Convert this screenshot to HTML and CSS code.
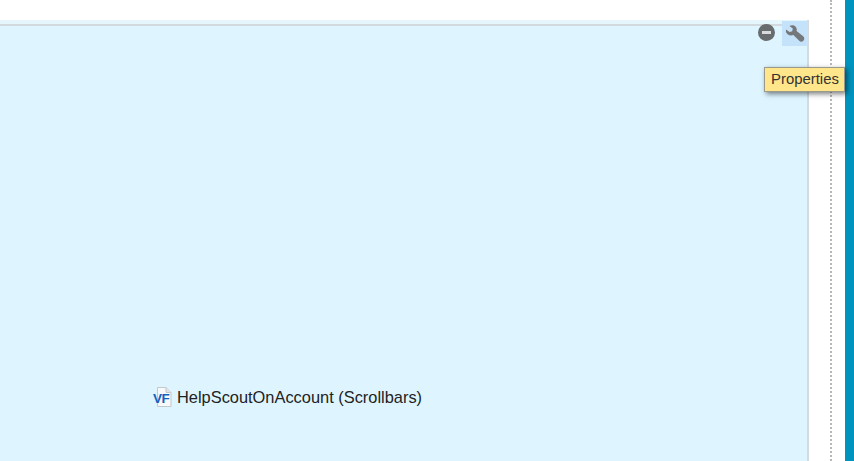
FILE: index.html
```html
<!DOCTYPE html>
<html lang="en">
<head>
    <meta charset="UTF-8">
    <title>Page layout</title>
    <link rel="stylesheet" href="styles.css">
</head>
<body>
<div class="top-bar"></div>
<div class="main">
    <div class="region">
        <div class="region-actions">
            <span class="remove-btn"><span class="remove-dash"></span></span>
            <span class="props-btn">
                <svg width="22" height="22" viewBox="0 0 22 22">
                    <path d="M2 6.4 L5.6 9 L8.2 8.2 L8.8 5.6 L5.4 3 C7.8 1.8 10.6 2.2 12 4.2 C12.8 5.4 13 6.8 12.6 8 L19.2 13.2 C20.6 14.6 20.6 16.4 19.4 17.8 C18.2 19 16.4 19 15.2 17.8 L9.4 12 C7.4 12.8 5.2 12.4 3.6 11.2 C2.2 10 1.6 8.2 2 6.4 Z" fill="#75787b"/>
                </svg>
            </span>
        </div>
        <div class="component">
            <span class="vf-icon">
                <svg class="vf-page" width="18" height="20" viewBox="0 0 18 20">
                    <path d="M3.5 .5 H12 L17 5.5 V19.5 H3.5 Z" fill="#f6f8fa" stroke="#c3c8cc"/>
                    <path d="M12 .5 V5.5 H17" fill="#dfe3e6" stroke="#c3c8cc"/>
                </svg>
                <span class="vf-label">VF</span>
            </span>
            <span class="component-name">HelpScoutOnAccount (Scrollbars)</span>
        </div>
    </div>
    <div class="gutter">
        <div class="dotted"></div>
    </div>
    <div class="edge"></div>
</div>
<div class="tooltip">Properties</div>
</body>
</html>
```

FILE: styles.css
```css
html, body {
    height: 100%;
}

body {
    display: flex;
    flex-direction: column;
    margin: 0;
    overflow: hidden;
    background-color: #fff;
    font-family: "Liberation Sans", Arial, sans-serif;
    color: #222;
}

.top-bar {
    height: 20px;
    flex: none;
}

.main {
    display: flex;
    flex: 1;
    min-height: 0;
}

.region {
    display: flex;
    flex-direction: column;
    justify-content: space-between;
    width: 807px;
    flex: none;
    background-color: #def5ff;
    border-right: 2px solid #d5dadc;
    background-image: linear-gradient(#e6f6fd 0, #e6f6fd 4px, #d3dadd 4px, #d3dadd 6px, transparent 6px);
}

.region-actions {
    display: flex;
    justify-content: flex-end;
    align-items: center;
    gap: 7px;
    height: 25px;
    margin: 1px -1px 0 0;
}

.remove-btn {
    display: flex;
    align-items: center;
    justify-content: center;
    width: 17px;
    height: 17px;
    margin-top: -2px;
    border-radius: 50%;
    background-color: #686c6f;
}

.remove-dash {
    width: 9px;
    height: 3px;
    background-color: #d8dadb;
}

.props-btn {
    display: flex;
    align-items: center;
    justify-content: center;
    width: 26px;
    height: 25px;
    background-color: #c5e2fb;
}

.component {
    display: flex;
    align-items: center;
    gap: 5px;
    margin: 0 0 54px 153px;
}

.vf-icon {
    position: relative;
    display: block;
    width: 19px;
    height: 20px;
}

.vf-page {
    position: absolute;
    left: 1px;
    top: 0;
}

.vf-label {
    position: absolute;
    left: 0;
    bottom: 1px;
    font-size: 13.5px;
    font-weight: bold;
    letter-spacing: -.5px;
    color: #1360bd;
}

.component-name {
    font-size: 16.4px;
    white-space: nowrap;
}

.gutter {
    width: 36px;
    flex: none;
    margin-top: -20px;
    padding-left: 21px;
    box-sizing: border-box;
}

.dotted {
    width: 0;
    height: 100%;
    border-left: 2px dotted #9a9a9a;
    opacity: .7;
}

.edge {
    flex: 1;
    margin-top: -20px;
    background-color: #0093bd;
}

.tooltip {
    position: absolute;
    left: 764px;
    top: 67px;
    height: 23px;
    line-height: 23px;
    padding: 0 5px 0 6px;
    background-color: #ffe68a;
    border: 1px solid #9a9a8c;
    box-shadow: 2px 2px 5px rgba(0, 0, 0, .5);
    font-size: 14.9px;
    color: #333;
    white-space: nowrap;
}
```
